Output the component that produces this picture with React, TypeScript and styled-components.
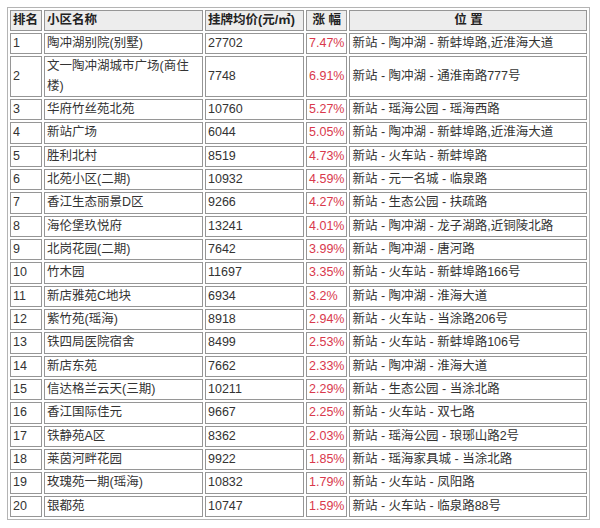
import React from "react";
import styled, { createGlobalStyle } from "styled-components";

const GlobalStyle = createGlobalStyle`
  body {
    margin: 0;
    background: #ffffff;
    font-family: "Liberation Sans", "Noto Sans CJK SC", sans-serif;
  }
`;

type rowType = {
  name: string;
  price: number;
  change: string;
  place: string;
};

const rows: rowType[] = [
  { name: "陶冲湖别院(别墅)", price: 27702, change: "7.47%", place: "新站 - 陶冲湖 - 新蚌埠路,近淮海大道" },
  { name: "文一陶冲湖城市广场(商住楼)", price: 7748, change: "6.91%", place: "新站 - 陶冲湖 - 通淮南路777号" },
  { name: "华府竹丝苑北苑", price: 10760, change: "5.27%", place: "新站 - 瑶海公园 - 瑶海西路" },
  { name: "新站广场", price: 6044, change: "5.05%", place: "新站 - 陶冲湖 - 新蚌埠路,近淮海大道" },
  { name: "胜利北村", price: 8519, change: "4.73%", place: "新站 - 火车站 - 新蚌埠路" },
  { name: "北苑小区(二期)", price: 10932, change: "4.59%", place: "新站 - 元一名城 - 临泉路" },
  { name: "香江生态丽景D区", price: 9266, change: "4.27%", place: "新站 - 生态公园 - 扶疏路" },
  { name: "海伦堡玖悦府", price: 13241, change: "4.01%", place: "新站 - 陶冲湖 - 龙子湖路,近铜陵北路" },
  { name: "北岗花园(二期)", price: 7642, change: "3.99%", place: "新站 - 陶冲湖 - 唐河路" },
  { name: "竹木园", price: 11697, change: "3.35%", place: "新站 - 火车站 - 新蚌埠路166号" },
  { name: "新店雅苑C地块", price: 6934, change: "3.2%", place: "新站 - 陶冲湖 - 淮海大道" },
  { name: "紫竹苑(瑶海)", price: 8918, change: "2.94%", place: "新站 - 火车站 - 当涂路206号" },
  { name: "铁四局医院宿舍", price: 8499, change: "2.53%", place: "新站 - 火车站 - 新蚌埠路106号" },
  { name: "新店东苑", price: 7662, change: "2.33%", place: "新站 - 陶冲湖 - 淮海大道" },
  { name: "信达格兰云天(三期)", price: 10211, change: "2.29%", place: "新站 - 生态公园 - 当涂北路" },
  { name: "香江国际佳元", price: 9667, change: "2.25%", place: "新站 - 火车站 - 双七路" },
  { name: "铁静苑A区", price: 8362, change: "2.03%", place: "新站 - 瑶海公园 - 琅琊山路2号" },
  { name: "莱茵河畔花园", price: 9922, change: "1.85%", place: "新站 - 瑶海家具城 - 当涂北路" },
  { name: "玫瑰苑一期(瑶海)", price: 10832, change: "1.79%", place: "新站 - 火车站 - 凤阳路" },
  { name: "银都苑", price: 10747, change: "1.59%", place: "新站 - 火车站 - 临泉路88号" },
];

const Table = styled.table`
  margin: 7px;
  border: 1px solid #b4b4b4;
  border-collapse: separate;
  border-spacing: 2px;
  table-layout: fixed;
  font-size: 12.5px;
  color: #333333;
`;

const HeadCell = styled.th<{ $w: number; $center?: boolean }>`
  width: ${(p) => p.$w}px;
  box-sizing: border-box;
  padding: 0 2px;
  border: 1px solid #969696;
  background: #ededed;
  color: #222222;
  font-weight: 700;
  line-height: 19px;
  text-align: ${(p) => (p.$center ? "center" : "left")};
  white-space: nowrap;
`;

const Cell = styled.td<{ $red?: boolean }>`
  padding: 0 2px;
  border: 1px solid #969696;
  line-height: 19.33px;
  text-align: left;
  vertical-align: middle;
  color: ${(p) => (p.$red ? "#d9384c" : "#333333")};
`;

export default function App() {
  return (
    <>
      <GlobalStyle />
      <Table>
        <thead>
          <tr>
            <HeadCell $w={32}>排名</HeadCell>
            <HeadCell $w={159}>小区名称</HeadCell>
            <HeadCell $w={99}>挂牌均价(元/㎡)</HeadCell>
            <HeadCell $w={38} $center>
              涨 幅
            </HeadCell>
            <HeadCell $w={238} $center>
              位 置
            </HeadCell>
          </tr>
        </thead>
        <tbody>
          {rows.map((row, i) => (
            <tr key={row.name}>
              <Cell>{i + 1}</Cell>
              <Cell>{row.name}</Cell>
              <Cell>{row.price}</Cell>
              <Cell $red>{row.change}</Cell>
              <Cell>{row.place}</Cell>
            </tr>
          ))}
        </tbody>
      </Table>
    </>
  );
}
